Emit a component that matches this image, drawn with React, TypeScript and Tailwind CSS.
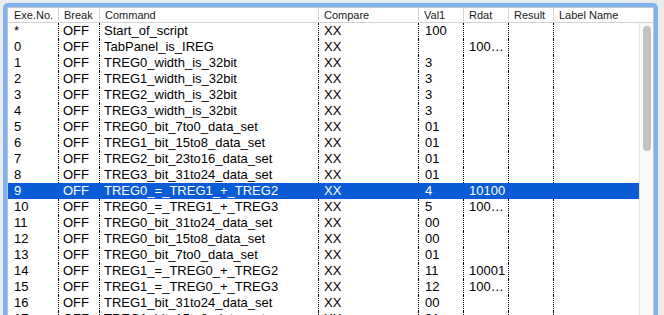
import React from 'react';

type Row = {
  no: string;
  brk: string;
  cmd: string;
  cmp: string;
  val1: string;
  rdat: string;
  result: string;
  label: string;
};

const mk = (no: string, cmd: string, val1 = '', rdat = ''): Row => ({
  no,
  brk: 'OFF',
  cmd,
  cmp: 'XX',
  val1,
  rdat,
  result: '',
  label: '',
});

const rows: Row[] = [
  mk('*', 'Start_of_script', '100'),
  mk('0', 'TabPanel_is_IREG', '', '100…'),
  mk('1', 'TREG0_width_is_32bit', '3'),
  mk('2', 'TREG1_width_is_32bit', '3'),
  mk('3', 'TREG2_width_is_32bit', '3'),
  mk('4', 'TREG3_width_is_32bit', '3'),
  mk('5', 'TREG0_bit_7to0_data_set', '01'),
  mk('6', 'TREG1_bit_15to8_data_set', '01'),
  mk('7', 'TREG2_bit_23to16_data_set', '01'),
  mk('8', 'TREG3_bit_31to24_data_set', '01'),
  mk('9', 'TREG0_=_TREG1_+_TREG2', '4', '10100'),
  mk('10', 'TREG0_=_TREG1_+_TREG3', '5', '100…'),
  mk('11', 'TREG0_bit_31to24_data_set', '00'),
  mk('12', 'TREG0_bit_15to8_data_set', '00'),
  mk('13', 'TREG0_bit_7to0_data_set', '01'),
  mk('14', 'TREG1_=_TREG0_+_TREG2', '11', '10001'),
  mk('15', 'TREG1_=_TREG0_+_TREG3', '12', '100…'),
  mk('16', 'TREG1_bit_31to24_data_set', '00'),
  mk('17', 'TREG1_bit_15to8_data_set', '01'),
];

const SELECTED = '9';

const cols = 'grid grid-cols-[51px_41px_219px_100px_45px_45px_45px_85px]';

const headers = ['Exe.No.', 'Break', 'Command', 'Compare', 'Val1', 'Rdat', 'Result', 'Label Name'];

export default function App() {
  return (
    <div
      className="w-[664px] h-[315px] bg-[#ececec] overflow-hidden pt-[3px] pl-[3px]"
      style={{ fontFamily: '"Liberation Sans", Arial, sans-serif' }}
    >
      <div className="w-[655px] h-[340px] border-4 border-[#7db3f2] rounded-t-[5px]">
        <div className="h-full border border-[#c4c4c4] bg-white flex flex-col">
          {/* header */}
          <div className="flex h-[15px] border-b border-[#d3d3d3] text-[11px] leading-[14px] text-[#1a1a1a]">
            <div className={cols}>
              {headers.map((h, i) => (
                <div
                  key={h}
                  className={
                    i === 0
                      ? 'pl-[6px] border-r border-[#d6d6d6] h-[14px]'
                      : i < 7
                        ? 'pl-[5px] border-r border-[#d6d6d6] h-[14px]'
                        : 'pl-[5px] h-[14px]'
                  }
                >
                  {h}
                </div>
              ))}
            </div>
          </div>

          {/* body */}
          <div className="flex flex-1">
            <div className="w-[631px] flex flex-col text-[13px] leading-[16px] text-black">
              {rows.map((r) => {
                const sel = r.no === SELECTED;
                const sep = sel ? 'border-r border-transparent' : 'border-r border-dotted border-black';
                return (
                  <div
                    key={r.no}
                    className={sel ? `${cols} h-[16px] bg-[#0a5cd6] text-white` : `${cols} h-[16px]`}
                  >
                    <div className={`pl-[6px] whitespace-nowrap ${sep}`}>{r.no}</div>
                    <div className={`pl-[4px] whitespace-nowrap ${sep}`}>{r.brk}</div>
                    <div className={`pl-[4px] whitespace-nowrap ${sep}`}>{r.cmd}</div>
                    <div className={`pl-[5px] whitespace-nowrap ${sep}`}>{r.cmp}</div>
                    <div className={`pl-[6px] whitespace-nowrap ${sep}`}>{r.val1}</div>
                    <div className={`pl-[5px] whitespace-nowrap ${sep}`}>{r.rdat}</div>
                    <div className={`pl-[5px] whitespace-nowrap ${sep}`}>{r.result}</div>
                    <div className="pl-[5px] whitespace-nowrap">{r.label}</div>
                  </div>
                );
              })}
            </div>
            {/* scrollbar */}
            <div className="w-[14px] border-l border-[#e6e6e6] bg-[#fafafa] pt-[3px] pl-[3px]">
              <div className="w-[8px] h-[125px] rounded-full bg-[#c2c2c2]" />
            </div>
          </div>
        </div>
      </div>
    </div>
  );
}
